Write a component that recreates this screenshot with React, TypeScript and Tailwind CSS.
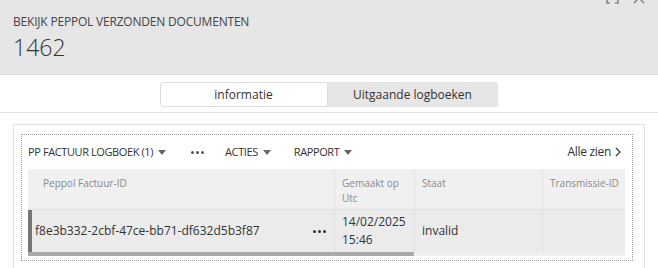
import React from 'react';

const font = { fontFamily: '"Open Sans", "Noto Sans", sans-serif' };

function Caret() {
    return <span className="ml-[5px] inline-block border-x-[4px] border-t-[5px] border-x-transparent border-t-[#666] align-middle" />;
}

function Dots({ className = '' }: { className?: string }) {
    return (
        <span className={`flex items-center gap-[2px] ${className}`}>
            <span className="h-[3px] w-[3px] rounded-full bg-current" />
            <span className="h-[3px] w-[3px] rounded-full bg-current" />
            <span className="h-[3px] w-[3px] rounded-full bg-current" />
        </span>
    );
}

export default function App() {
    return (
        <div className="relative h-[268px] w-[658px] overflow-hidden bg-white text-[#333]" style={font}>
            {/* Header */}
            <div className="relative h-[75px] border-b border-[#dcdcdc] bg-[#e6e6e6] px-[13px] pt-[14px]">
                <div className="text-[12px] leading-[16px] tracking-[-0.2px] text-[#444]">BEKIJK PEPPOL VERZONDEN DOCUMENTEN</div>
                <div className="mt-[2px] text-[23px] leading-[30px] font-light text-[#333]">1462</div>
                <div className="absolute right-[13px] top-[-9px] flex items-center gap-[14px] text-[#888]">
                    <svg width="13" height="13" viewBox="0 0 13 13" fill="none" stroke="currentColor" strokeWidth="1.6">
                        <path d="M1 4V1h3M9 1h3v3M12 9v3H9M4 12H1V9" />
                    </svg>
                    <svg width="12" height="12" viewBox="0 0 12 12" fill="none" stroke="currentColor" strokeWidth="1.6">
                        <path d="M1 1l10 10M11 1L1 11" />
                    </svg>
                </div>
            </div>

            {/* Tabs */}
            <div className="flex h-[38px] items-start justify-center border-b border-[#e3e3e3] pt-[7px]">
                <div className="ml-[-1px] flex h-[25px] text-[12px]">
                    <div className="flex w-[168px] items-center justify-center rounded-l-[3px] border border-[#dedede] bg-white text-[#333]">
                        informatie
                    </div>
                    <div className="flex w-[170px] items-center justify-center rounded-r-[3px] bg-[#e6e6e6] text-[#333]">
                        Uitgaande logboeken
                    </div>
                </div>
            </div>

            {/* Card */}
            <div className="mx-[13px] mt-[11px] h-[200px] border border-[#e3e3e3] bg-white pl-[7px] pr-[11px] pt-[9px]">
                <div className="h-[127px] border border-dotted border-[#999] px-[6px]">
                    {/* Toolbar */}
                    <div className="flex h-[34px] items-center text-[11px] tracking-[-0.4px] text-[#333]">
                        <span className="flex items-center">PP FACTUUR LOGBOEK (1)<Caret /></span>
                        <Dots className="ml-[25px] text-[#555]" />
                        <span className="ml-[21px] flex items-center">ACTIES<Caret /></span>
                        <span className="ml-[23px] flex items-center">RAPPORT<Caret /></span>
                        <span className="ml-auto mr-[4px] flex items-center gap-[3px] text-[12px] tracking-[-0.3px]">
                            Alle zien
                            <svg width="8" height="10" viewBox="0 0 8 10" fill="none" stroke="#444" strokeWidth="1.4">
                                <path d="M2 1l4 4-4 4" />
                            </svg>
                        </span>
                    </div>

                    {/* Table */}
                    <div className="w-[597px]">
                        <div className="grid h-[40px] grid-cols-[306px_80px_128px_83px] bg-[#f0f0f0] text-[10px] leading-[15px] whitespace-nowrap text-[#888]">
                            <div className="pl-[15px] pt-[7px]">Peppol Factuur-ID</div>
                            <div className="border-l border-[#e2e2e2] pl-[7px] pt-[7px]">Gemaakt op<br />Utc</div>
                            <div className="border-l border-[#e2e2e2] pl-[7px] pt-[7px]">Staat</div>
                            <div className="border-l border-[#e2e2e2] pl-[7px] pt-[7px]">Transmissie-ID</div>
                        </div>
                        <div className="grid h-[43px] grid-cols-[306px_80px_128px_83px] border-t border-[#e2e2e2] bg-[#ebebeb] text-[12px] leading-[18px] text-[#333]">
                            <div className="flex items-center border-l-[4px] border-[#777] pl-[3px] pr-[8px]">
                                <span>f8e3b332-2cbf-47ce-bb71-df632d5b3f87</span>
                                <Dots className="ml-auto text-[#333]" />
                            </div>
                            <div className="flex items-center border-l border-[#e0e0e0] pl-[7px]">14/02/2025<br />15:46</div>
                            <div className="flex items-center border-l border-[#e0e0e0] pl-[7px]">invalid</div>
                            <div className="border-l border-[#e0e0e0]" />
                        </div>
                        <div className="h-[4px] bg-[#f0f0f0]">
                            <div className="h-full w-[386px] bg-[#aaa]" />
                        </div>
                    </div>
                </div>
            </div>
        </div>
    );
}
